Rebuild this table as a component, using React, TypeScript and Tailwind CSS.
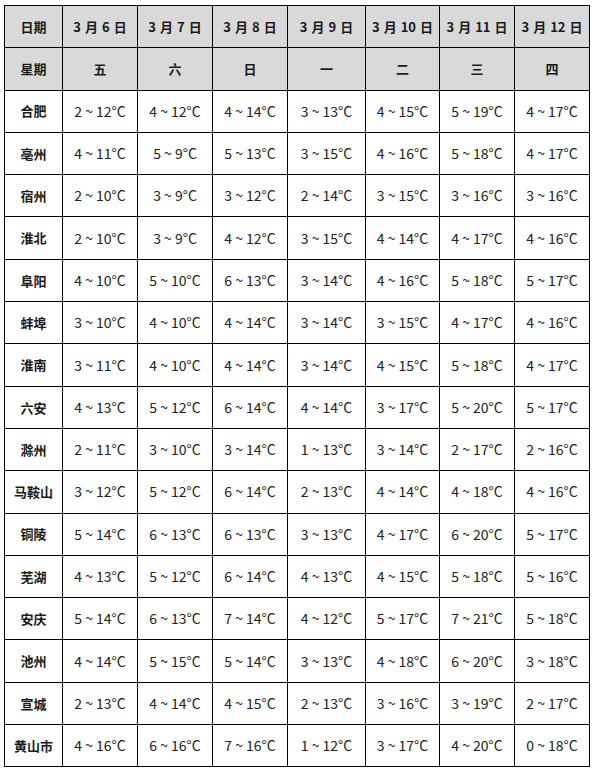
import { Fragment } from 'react';

const dates = [
    ['3', '6'],
    ['3', '7'],
    ['3', '8'],
    ['3', '9'],
    ['3', '10'],
    ['3', '11'],
    ['3', '12'],
];
const weekdays = ['五', '六', '日', '一', '二', '三', '四'];

const rows: [string, string[]][] = [
    ['合肥', ['2 ~ 12', '4 ~ 12', '4 ~ 14', '3 ~ 13', '4 ~ 15', '5 ~ 19', '4 ~ 17']],
    ['亳州', ['4 ~ 11', '5 ~ 9', '5 ~ 13', '3 ~ 15', '4 ~ 16', '5 ~ 18', '4 ~ 17']],
    ['宿州', ['2 ~ 10', '3 ~ 9', '3 ~ 12', '2 ~ 14', '3 ~ 15', '3 ~ 16', '3 ~ 16']],
    ['淮北', ['2 ~ 10', '3 ~ 9', '4 ~ 12', '3 ~ 15', '4 ~ 14', '4 ~ 17', '4 ~ 16']],
    ['阜阳', ['4 ~ 10', '5 ~ 10', '6 ~ 13', '3 ~ 14', '4 ~ 16', '5 ~ 18', '5 ~ 17']],
    ['蚌埠', ['3 ~ 10', '4 ~ 10', '4 ~ 14', '3 ~ 14', '3 ~ 15', '4 ~ 17', '4 ~ 16']],
    ['淮南', ['3 ~ 11', '4 ~ 10', '4 ~ 14', '3 ~ 14', '4 ~ 15', '5 ~ 18', '4 ~ 17']],
    ['六安', ['4 ~ 13', '5 ~ 12', '6 ~ 14', '4 ~ 14', '3 ~ 17', '5 ~ 20', '5 ~ 17']],
    ['滁州', ['2 ~ 11', '3 ~ 10', '3 ~ 14', '1 ~ 13', '3 ~ 14', '2 ~ 17', '2 ~ 16']],
    ['马鞍山', ['3 ~ 12', '5 ~ 12', '6 ~ 14', '2 ~ 13', '4 ~ 14', '4 ~ 18', '4 ~ 16']],
    ['铜陵', ['5 ~ 14', '6 ~ 13', '6 ~ 13', '3 ~ 13', '4 ~ 17', '6 ~ 20', '5 ~ 17']],
    ['芜湖', ['4 ~ 13', '5 ~ 12', '6 ~ 14', '4 ~ 13', '4 ~ 15', '5 ~ 18', '5 ~ 16']],
    ['安庆', ['5 ~ 14', '6 ~ 13', '7 ~ 14', '4 ~ 12', '5 ~ 17', '7 ~ 21', '5 ~ 18']],
    ['池州', ['4 ~ 14', '5 ~ 15', '5 ~ 14', '3 ~ 13', '4 ~ 18', '6 ~ 20', '3 ~ 18']],
    ['宣城', ['2 ~ 13', '4 ~ 14', '4 ~ 15', '2 ~ 13', '3 ~ 16', '3 ~ 19', '2 ~ 17']],
    ['黄山市', ['4 ~ 16', '6 ~ 16', '7 ~ 16', '1 ~ 12', '3 ~ 17', '4 ~ 20', '0 ~ 18']],
];

const headCell = 'bg-[#d9d9d9] flex items-center justify-center font-bold text-[13px] text-[#1a1a1a]';
const bodyCell = 'bg-white flex items-center justify-center text-[14px] text-[#222]';

export default function App() {
    return (
        <div className="w-[596px] h-[770px] bg-white pt-[5px] pl-[4px] font-['Noto_Sans_CJK_SC','Noto_Sans',sans-serif]">
            <div className="w-[586px] grid grid-cols-[57px_74px_74px_74px_77px_73px_74px_74px] auto-rows-[41.3px] gap-px bg-black border border-black">
                <div className={headCell}>日期</div>
                {dates.map(([m, d]) => (
                    <div key={d} className={headCell + ' gap-[4px]'}>
                        <span>{m}</span>
                        <span>月</span>
                        <span>{d}</span>
                        <span>日</span>
                    </div>
                ))}
                <div className={headCell}>星期</div>
                {weekdays.map((w) => (
                    <div key={w} className={headCell}>{w}</div>
                ))}
                {rows.map(([city, temps]) => (
                    <Fragment key={city}>
                        <div className="bg-white flex items-center justify-center font-bold text-[13px] text-[#1a1a1a]">
                            {city}
                        </div>
                        {temps.map((t, i) => (
                            <div key={i} className={bodyCell}>
                                {t}°C
                            </div>
                        ))}
                    </Fragment>
                ))}
            </div>
        </div>
    );
}
